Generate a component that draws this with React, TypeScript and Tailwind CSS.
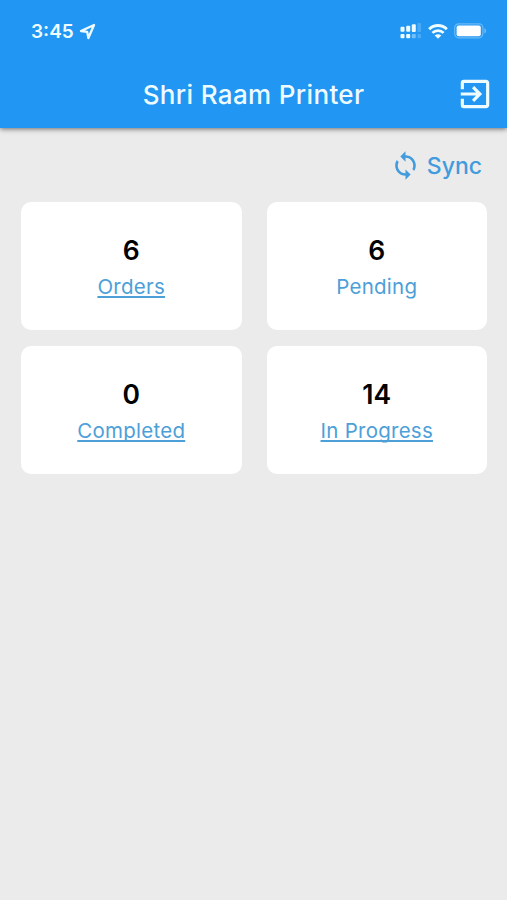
import { MdExitToApp, MdSync } from 'react-icons/md';

interface Stat {
  label: string;
  count: number;
  linked: boolean;
}

const stats: Stat[] = [
  { label: 'Orders', count: 6, linked: true },
  { label: 'Pending', count: 6, linked: false },
  { label: 'Completed', count: 0, linked: true },
  { label: 'In Progress', count: 14, linked: true },
];

function LocationIcon() {
  return (
    <svg width="17" height="17" viewBox="0 0 17 17" fill="none">
      <path
        d="M15 2L2 8L8.2 8.9L9.4 15L15 2Z"
        stroke="currentColor"
        strokeWidth="2.3"
        strokeLinejoin="round"
      />
    </svg>
  );
}

function SignalIcon() {
  return (
    <svg width="22" height="16" viewBox="0 0 22 16" fill="currentColor">
      <rect x="0.5" y="3.8" width="4" height="5" rx="1" />
      <rect x="6.2" y="2.8" width="4" height="6" rx="1" />
      <rect x="11.8" y="1.2" width="4" height="7.8" rx="1" />
      <rect x="17.4" y="0" width="3.6" height="9" rx="1" opacity="0.2" />
      <rect x="0.5" y="11" width="4" height="4.2" rx="1" />
      <rect x="6.2" y="11" width="4" height="4.2" rx="1" />
      <rect x="11.8" y="11" width="4" height="4.2" rx="1" opacity="0.4" />
      <rect x="17.4" y="11" width="3.6" height="4.2" rx="1" opacity="0.2" />
    </svg>
  );
}

function WifiIcon() {
  return (
    <svg width="20" height="15" viewBox="0 0 20 15" fill="none">
      <path d="M1.2 5.2a12.6 12.6 0 0 1 17.6 0" stroke="currentColor" strokeWidth="3" />
      <path d="M4.4 8.9a8 8 0 0 1 11.2 0" stroke="currentColor" strokeWidth="2.7" />
      <path d="M10 14.8L6.7 11.6a4.6 4.6 0 0 1 6.6 0Z" fill="currentColor" />
    </svg>
  );
}

function BatteryIcon() {
  return (
    <svg width="33" height="16" viewBox="0 0 33 16" fill="none">
      <rect
        x="0.7"
        y="0.8"
        width="28.2"
        height="14"
        rx="4"
        stroke="currentColor"
        strokeWidth="1.2"
        opacity="0.35"
      />
      <rect x="2.6" y="2.6" width="24.2" height="10.6" rx="2" fill="white" />
      <path d="M30.4 5.2c2.2 0.9 2.2 4.3 0 5.2Z" fill="currentColor" opacity="0.4" />
    </svg>
  );
}

function StatCard({ label, count, linked }: Stat) {
  return (
    <div className="flex h-[128px] flex-col items-center rounded-[10px] bg-white pt-[31px]">
      <span className="text-[26.5px] leading-[34px] font-semibold text-black">{count}</span>
      <span
        className={`mt-[6px] text-[20.5px] leading-[28px] tracking-[0.25px] text-[#4d9fd8] ${
          linked
            ? 'underline decoration-[1.5px] underline-offset-[2px] [text-decoration-skip-ink:none]'
            : ''
        }`}
      >
        {label}
      </span>
    </div>
  );
}

export default function App() {
  return (
    <div className="flex h-[900px] w-[507px] flex-col overflow-hidden bg-[#ebebeb] font-['Inter','Liberation_Sans',sans-serif]">
      <header className="h-[128px] bg-[#2196f3] text-[#effcff] shadow-[0_1px_5px_rgba(0,0,0,0.55)]">
        <div className="flex h-[62px] items-center justify-between pr-[20px] pl-[31px]">
          <div className="flex items-center gap-[5px]">
            <span className="text-[19px] leading-none font-semibold">3:45</span>
            <LocationIcon />
          </div>
          <div className="flex items-center gap-[6px]">
            <SignalIcon />
            <WifiIcon />
            <BatteryIcon />
          </div>
        </div>
        <div className="grid h-[64px] grid-cols-[1fr_auto_1fr] items-center">
          <h1 className="col-start-2 pt-[2px] text-[26px] leading-none font-medium tracking-[0.35px]">
            Shri Raam Printer
          </h1>
          <button className="mr-[13px] justify-self-end" aria-label="Log out">
            <MdExitToApp size={38} />
          </button>
        </div>
      </header>

      <main className="pr-[20px] pl-[21px]">
        <div className="flex h-[74px] items-center justify-end pr-[5px]">
          <button className="flex items-center gap-[6px] text-[#429bdd]">
            <MdSync size={31} />
            <span className="pt-[2px] text-[23px] leading-none font-medium">Sync</span>
          </button>
        </div>
        <div className="grid grid-cols-2 gap-x-[25px] gap-y-[16px]">
          {stats.map((stat) => (
            <StatCard key={stat.label} {...stat} />
          ))}
        </div>
      </main>
    </div>
  );
}
